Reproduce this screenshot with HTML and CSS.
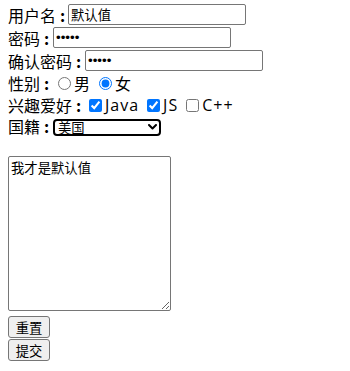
FILE: index.html
```html
<!DOCTYPE html>
<html lang="zh-CN">
<head>
<meta charset="utf-8">
<title>表单</title>
<link rel="stylesheet" href="styles.css">
</head>
<body>
<form class="form">
  <div class="row r1"><span class="lbl">用户名</span><span class="colon">:</span><input class="text" type="text" value="默认值"></div>
  <div class="row r2"><span class="lbl">密码</span><span class="colon">:</span><input class="text pwd" type="password" value="12345"></div>
  <div class="row r3"><span class="lbl">确认密码</span><span class="colon">:</span><input class="text pwd" type="password" value="12345"></div>
  <div class="row r4"><span class="lbl">性别</span><span class="colon">:</span>
    <input class="radio" type="radio" name="sex"><span class="opt">男</span>
    <input class="radio second" type="radio" name="sex" checked><span class="opt">女</span>
  </div>
  <div class="row r5"><span class="lbl">兴趣爱好</span><span class="colon">:</span>
    <input class="check" type="checkbox" checked><span class="opt latin">Java</span>
    <input class="check next" type="checkbox" checked><span class="opt latin">JS</span>
    <input class="check next" type="checkbox"><span class="opt latin">C++</span>
  </div>
  <div class="row r6"><span class="lbl">国籍</span><span class="colon">:</span>
    <span class="select-wrap">
      <select class="select">
        <option>中国</option>
        <option selected>美国</option>
        <option>日本</option>
      </select>
      <svg class="chev" width="9" height="6" viewBox="0 0 9 6"><path d="M1 1 L4.5 4.5 L8 1" fill="none" stroke="#000" stroke-width="2" stroke-linecap="round" stroke-linejoin="round"/></svg>
    </span>
  </div>
  <textarea class="area">我才是默认值</textarea>
  <button class="btn b1" type="reset">重置</button>
  <button class="btn b2" type="submit">提交</button>
</form>
</body>
</html>
```
FILE: styles.css
```css
html, body {
  margin: 0;
  padding: 0;
  background: #fff;
}
body {
  font-family: "Noto Sans CJK SC", "Open Sans", sans-serif;
  font-size: 16px;
  color: #000;
}
.form {
  padding: 3px 0 0 8px;
}
.row {
  display: flex;
  align-items: center;
  white-space: nowrap;
  line-height: 16px;
}
.r1, .r2, .r3 { height: 23px; }
.r4 { height: 22px; }
.r5 { height: 22px; }
.r6 { height: 20px; }
.lbl {
  display: inline-block;
  line-height: 16px;
  height: 16px;
  overflow: visible;
}
.colon {
  display: inline-block;
  width: 13px;
  padding-left: 4px;
  box-sizing: border-box;
  font-weight: bold;
}
.r1 .colon { width: 12px; }
.text {
  box-sizing: border-box;
  width: 178px;
  height: 21px;
  margin: 0;
  padding: 1px 2px;
  border: 1px solid #767676;
  border-radius: 2px;
  font-family: "Noto Sans CJK SC", sans-serif;
  font-size: 13.33px;
  background: #fff;
  color: #000;
}
.pwd {
  font-family: "Liberation Sans", Arial, sans-serif;
  font-size: 13.33px;
  letter-spacing: 0;
}
.radio {
  width: 13px;
  height: 13px;
  margin: 0 3px 0 5px;
}
.radio.second { margin-left: 9px; }
.check {
  width: 13px;
  height: 13px;
  margin: 0 3px 0 4px;
}
.check.next { margin-left: 8px; }
.latin {
  font-family: "Open Sans", "Noto Sans", sans-serif;
  font-size: 16px;
  letter-spacing: 1px;
}
.select-wrap {
  position: relative;
  display: inline-block;
  width: 108px;
  height: 17px;
}
.select {
  -webkit-appearance: none;
  appearance: none;
  box-sizing: border-box;
  width: 108px;
  height: 17px;
  margin: 0;
  padding: 0 0 0 3px;
  border: 2px solid #000;
  border-radius: 4px;
  background: #fff;
  font-family: "Noto Sans CJK SC", sans-serif;
  font-size: 13.33px;
  line-height: 13px;
  color: #000;
  outline: none;
}
.chev {
  position: absolute;
  left: 95px;
  top: 6px;
}
.area {
  display: block;
  box-sizing: border-box;
  width: 163px;
  height: 155px;
  margin: 20px 0 0 0;
  padding: 2px;
  border: 1px solid #767676;
  border-radius: 2px;
  font-family: "Noto Sans CJK SC", sans-serif;
  font-size: 13.33px;
  line-height: 17px;
  color: #000;
  resize: both;
}
.btn {
  display: block;
  box-sizing: border-box;
  width: 42px;
  height: 22px;
  padding: 0;
  border: 1px solid #767676;
  border-radius: 3px;
  background: #efefef;
  font-family: "Noto Sans CJK SC", sans-serif;
  font-size: 13.33px;
  color: #000;
}
.b1 { margin-top: 5px; }
.b2 { margin-top: 1px; }
```
